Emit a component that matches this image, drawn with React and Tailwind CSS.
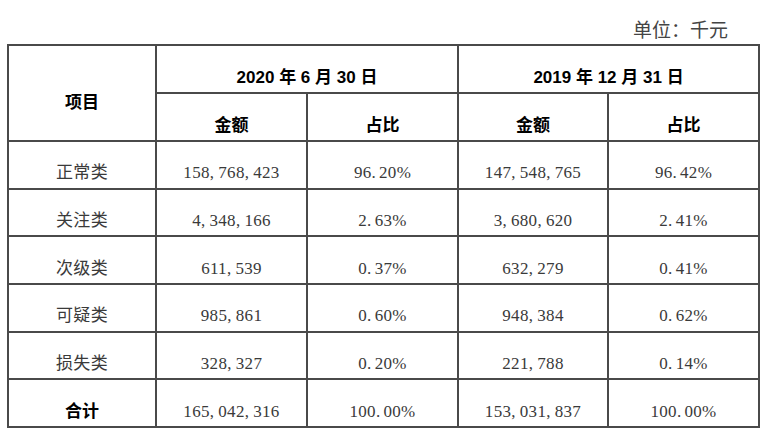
import React from 'react';

const rows = [
  ['正常类', '158,768,423', '96.20%', '147,548,765', '96.42%'],
  ['关注类', '4,348,166', '2.63%', '3,680,620', '2.41%'],
  ['次级类', '611,539', '0.37%', '632,279', '0.41%'],
  ['可疑类', '985,861', '0.60%', '948,384', '0.62%'],
  ['损失类', '328,327', '0.20%', '221,788', '0.14%'],
];

const serif = "font-['Liberation_Serif','Noto_Sans_CJK_SC',serif]";
const sans = "font-['Liberation_Sans','Noto_Sans_CJK_SC',sans-serif]";

// SimSun-style half-width punctuation: give commas and dots some air after them
const Num = ({ value }) =>
  value.split(/([,.])/).map((part, i) =>
    part === ',' || part === '.' ? (
      <span key={i} className={part === ',' ? 'pr-[4px]' : 'pr-[3px]'}>
        {part}
      </span>
    ) : (
      <span key={i}>{part}</span>
    )
  );

const Cell = ({ children, bold, rowSpan, colSpan, shift = 'pt-[16px]' }) => (
  <td rowSpan={rowSpan} colSpan={colSpan} className="border-2 border-[#4a4a4a] p-0 align-middle">
    <div
      className={`flex items-center justify-center ${shift} text-[17px] leading-none ${
        bold ? `${sans} font-bold text-black` : `${serif} text-[#3a3a3a] tracking-[0.3px]`
      }`}
    >
      {typeof children === 'string' && !bold ? <Num value={children} /> : children}
    </div>
  </td>
);

export default function App() {
  return (
    <div className="w-[766px] h-[438px] bg-white pl-[7px]">
      <div className={`pt-[18px] h-[44px] pr-[38px] text-right text-[19px] leading-[26px] text-[#444] ${serif}`}>
        单位：千元
      </div>
      <table className="table-fixed border-collapse w-[751px]">
        <colgroup>
          <col className="w-[148px]" />
          <col className="w-[151px]" />
          <col className="w-[151px]" />
          <col className="w-[150px]" />
          <col className="w-[151px]" />
        </colgroup>
        <tbody>
          <tr className="h-[48px]">
            <Cell bold rowSpan={2} shift="pt-[19px]">
              项目
            </Cell>
            <Cell bold colSpan={2}>2020 年 6 月 30 日</Cell>
            <Cell bold colSpan={2}>2019 年 12 月 31 日</Cell>
          </tr>
          <tr className="h-[48px]">
            <Cell bold>金额</Cell>
            <Cell bold>占比</Cell>
            <Cell bold>金额</Cell>
            <Cell bold>占比</Cell>
          </tr>
          {rows.map((r) => (
            <tr key={r[0]} className="h-[47.7px]">
              {r.map((v, i) => (
                <Cell key={i}>{v}</Cell>
              ))}
            </tr>
          ))}
          <tr className="h-[47.7px]">
            <Cell bold>合计</Cell>
            <Cell>165,042,316</Cell>
            <Cell>100.00%</Cell>
            <Cell>153,031,837</Cell>
            <Cell>100.00%</Cell>
          </tr>
        </tbody>
      </table>
    </div>
  );
}
